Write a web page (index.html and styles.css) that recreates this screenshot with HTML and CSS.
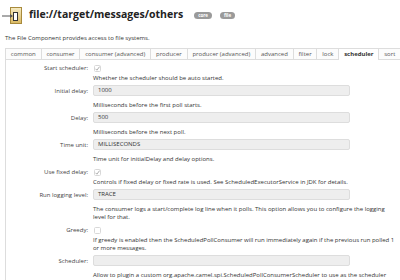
FILE: index.html
```html
<!DOCTYPE html>
<html lang="en">

<head>
    <meta charset="UTF-8">
    <title>file://target/messages/others</title>
    <link rel="stylesheet" href="styles.css">
</head>

<body>

    <div class="head">
        <svg class="logo" width="22" height="18" viewBox="0 0 22 18">
            <defs>
                <linearGradient id="gold" x1="0" y1="0" x2="0" y2="1">
                    <stop offset="0" stop-color="#f6ecc4"/>
                    <stop offset="1" stop-color="#d9b862"/>
                </linearGradient>
            </defs>
            <rect x="8.5" y="1.5" width="11" height="16" fill="url(#gold)" stroke="#a88a3c"/>
            <line x1="0" y1="10" x2="10" y2="10" stroke="#555" stroke-width="1"/>
            <path d="M8 8 L11 10 L8 12 Z" fill="#555"/>
            <rect x="11.5" y="6.5" width="4" height="8" fill="#fff" stroke="#333"/>
        </svg>
        <h1>file://target/messages/others</h1>
        <span class="badge">core</span>
        <span class="badge">file</span>
    </div>

    <p class="desc">The File Component provides access to file systems.</p>

    <!-- Tabs -->
    <ul class="tabs">
        <li>common</li>
        <li>consumer</li>
        <li>consumer (advanced)</li>
        <li>producer</li>
        <li>producer (advanced)</li>
        <li>advanced</li>
        <li>filter</li>
        <li>lock</li>
        <li class="active">scheduler</li>
        <li>sort</li>
    </ul>

    <div class="panel">
        <div class="field check-row">
            <label>Start scheduler:</label>
            <svg class="check" width="7" height="7" viewBox="0 0 7 7"><rect x="0.5" y="0.5" width="6" height="6" rx="1" fill="#fff" stroke="#d8d8d8"/><path d="M1.5 3.8 L2.9 5.2 L5.6 1.6" fill="none" stroke="#999" stroke-width="0.8"/></svg>
        </div>
        <p class="help first">Whether the scheduler should be auto started.</p>

        <div class="field">
            <label>Initial delay:</label>
            <div class="input">1000</div>
        </div>
        <p class="help">Milliseconds before the first poll starts.</p>

        <div class="field">
            <label>Delay:</label>
            <div class="input">500</div>
        </div>
        <p class="help">Milliseconds before the next poll.</p>

        <div class="field">
            <label>Time unit:</label>
            <div class="input">MILLISECONDS</div>
        </div>
        <p class="help">Time unit for initialDelay and delay options.</p>

        <div class="field check-row">
            <label>Use fixed delay:</label>
            <svg class="check" width="7" height="7" viewBox="0 0 7 7"><rect x="0.5" y="0.5" width="6" height="6" rx="1" fill="#fff" stroke="#d8d8d8"/><path d="M1.5 3.8 L2.9 5.2 L5.6 1.6" fill="none" stroke="#999" stroke-width="0.8"/></svg>
        </div>
        <p class="help after-check">Controls if fixed delay or fixed rate is used. See ScheduledExecutorService in JDK for details.</p>

        <div class="field">
            <label>Run logging level:</label>
            <div class="input">TRACE</div>
        </div>
        <p class="help">The consumer logs a start/complete log line when it polls. This option allows you to configure the logging level for that.</p>

        <div class="field check-row">
            <label>Greedy:</label>
            <svg class="check" width="7" height="7" viewBox="0 0 7 7"><rect x="0.5" y="0.5" width="6" height="6" rx="1" fill="#fff" stroke="#d8d8d8"/></svg>
        </div>
        <p class="help after-check">If greedy is enabled then the ScheduledPollConsumer will run immediately again if the previous run polled 1 or more messages.</p>

        <div class="field">
            <label>Scheduler:</label>
            <div class="input"></div>
        </div>
        <p class="help">Allow to plugin a custom org.apache.camel.spi.ScheduledPollConsumerScheduler to use as the scheduler for firing when the polling consumer runs.</p>
    </div>

</body>

</html>
```

FILE: styles.css
```css
body {
    font-family: 'Open Sans', 'DejaVu Sans', sans-serif;
    margin: 0;
    padding: 0;
    background-color: #fff;
    color: #333;
    overflow: hidden;
}

.head {
    display: flex;
    align-items: center;
    height: 28px;
    padding-left: 2px;
}

.logo {
    margin-top: 1px;
}

h1 {
    margin: 0 0 0 5px;
    font-size: 10.5px;
    font-weight: 700;
    color: #222;
}

.badge {
    display: inline-block;
    margin-left: 11px;
    padding: 0 4px;
    height: 7px;
    line-height: 7px;
    font-size: 4.5px;
    font-weight: 700;
    color: #fff;
    background-color: #9a9a9a;
    border-radius: 4px;
    margin-top: 3px;
}

.badge + .badge {
    margin-left: 8px;
}

.desc {
    margin: 5px 0 0 5px;
    font-size: 6px;
    line-height: 10px;
}

/* Tabs */
.tabs {
    display: flex;
    list-style: none;
    margin: 5px 0 0 5px;
    padding: 0;
    border-bottom: 1px solid #ddd;
}

.tabs li {
    flex-shrink: 0;
    white-space: nowrap;
    height: 10px;
    line-height: 10px;
    padding: 0 4.85px;
    font-size: 6px;
    color: #555;
    background-color: #fcfcfc;
    border: 1px solid #ddd;
    border-bottom: none;
    border-right: none;
}

.tabs li:last-child {
    border-right: 1px solid #ddd;
}

.tabs li.active {
    font-weight: 700;
    color: #333;
    background-color: #fff;
    border-right: 1px solid #ddd;
    margin-bottom: -1px;
    height: 11px;
}

.tabs li.active + li {
    border-left: none;
}

/* Form */
.panel {
    margin-left: 5px;
    border-left: 1px solid #ddd;
    padding-top: 2px;
    height: 240px;
}

.field {
    display: grid;
    grid-template-columns: 82px 257px;
    column-gap: 5px;
    align-items: center;
}

.field label {
    text-align: right;
    font-size: 6px;
    color: #444;
}

.check-row {
    height: 12px;
}

.input {
    height: 9px;
    line-height: 9px;
    padding: 0 4px;
    font-size: 6px;
    background-color: #eee;
    border: 1px solid #ddd;
    border-radius: 2px;
}

.check {
    display: block;
    margin-left: 1px;
}

.help {
    margin: 5px 0 3px 87px;
    max-width: 302px;
    font-size: 6px;
    line-height: 8px;
    color: #333;
}

.help.first,
.help.after-check {
    margin-top: 0;
}
```
